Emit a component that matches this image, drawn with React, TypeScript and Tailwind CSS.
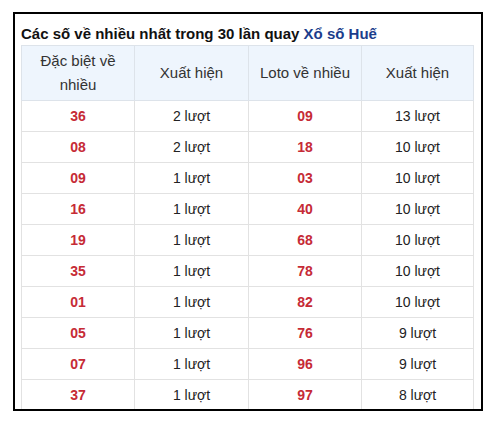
import React from "react";

const rows: [string, string, string, string][] = [
  ["36", "2 lượt", "09", "13 lượt"],
  ["08", "2 lượt", "18", "10 lượt"],
  ["09", "1 lượt", "03", "10 lượt"],
  ["16", "1 lượt", "40", "10 lượt"],
  ["19", "1 lượt", "68", "10 lượt"],
  ["35", "1 lượt", "78", "10 lượt"],
  ["01", "1 lượt", "82", "10 lượt"],
  ["05", "1 lượt", "76", "9 lượt"],
  ["07", "1 lượt", "96", "9 lượt"],
  ["37", "1 lượt", "97", "8 lượt"],
];

export default function App() {
  return (
    <div className="w-[500px] h-[425px] bg-white pt-[12px] pl-[13px] font-['Liberation_Sans',Arial,sans-serif]">
      <div className="w-[470px] h-[399px] border-2 border-black pl-[6px] pr-[8px] overflow-hidden">
        <div className="h-[31px] pt-[10px] text-[15px] font-bold leading-[20px] text-[#111]">
          Các số về nhiều nhất trong 30 lần quay <span className="text-[#1b3d8c]">Xổ số Huế</span>
        </div>
        <table className="w-[452px] border-collapse table-fixed text-[14px]">
          <thead>
            <tr className="bg-[#eef5fd] text-[#333] text-[15px]">
              <th className="w-[113px] h-[55px] border border-[#dde3ea] font-normal leading-[24px] px-[10px]">
                Đặc biệt về nhiều
              </th>
              <th className="w-[114px] border border-[#dde3ea] font-normal">Xuất hiện</th>
              <th className="w-[113px] border border-[#dde3ea] font-normal">Loto về nhiều</th>
              <th className="w-[112px] border border-[#dde3ea] font-normal">Xuất hiện</th>
            </tr>
          </thead>
          <tbody>
            {rows.map((r, i) => (
              <tr key={i} className="h-[31px]">
                <td className="border border-[#e2e2e2] text-center font-bold text-[#c62b36]">{r[0]}</td>
                <td className="border border-[#e2e2e2] text-center text-[#222]">{r[1]}</td>
                <td className="border border-[#e2e2e2] text-center font-bold text-[#c62b36]">{r[2]}</td>
                <td className="border border-[#e2e2e2] text-center text-[#222]">{r[3]}</td>
              </tr>
            ))}
          </tbody>
        </table>
      </div>
    </div>
  );
}
